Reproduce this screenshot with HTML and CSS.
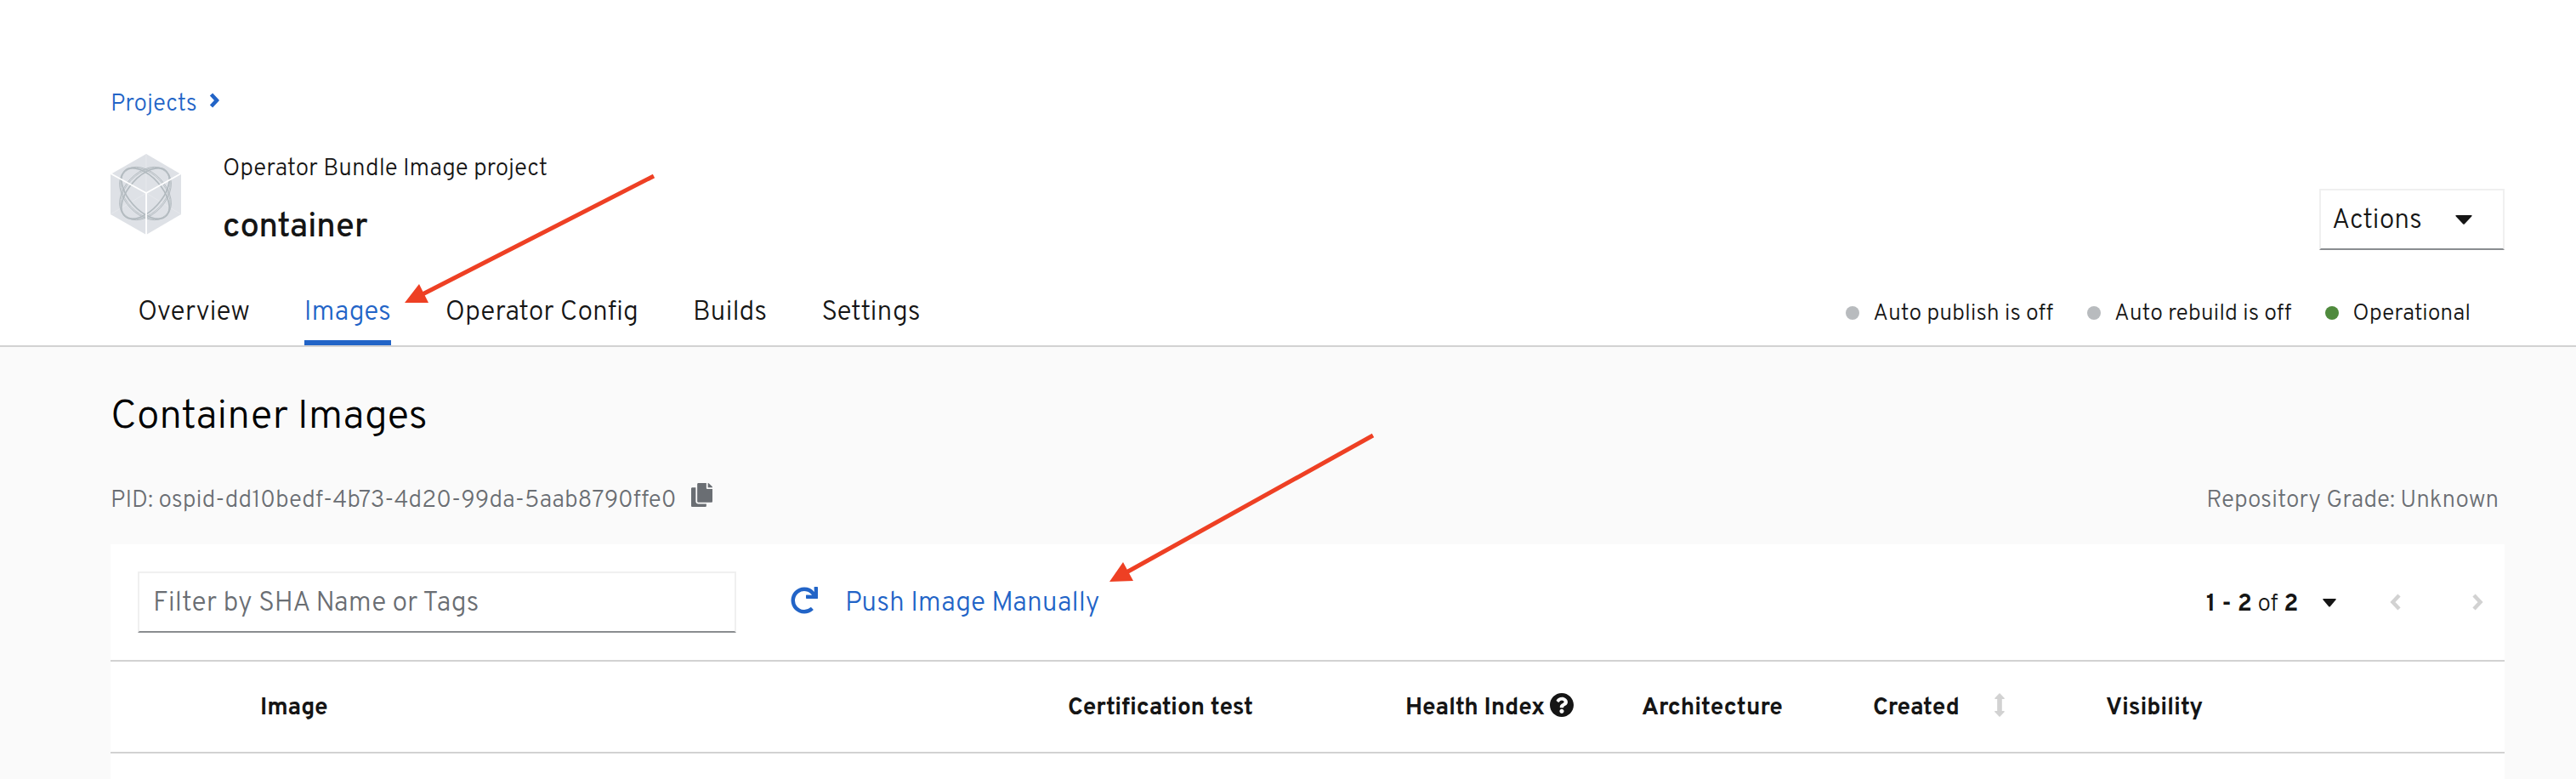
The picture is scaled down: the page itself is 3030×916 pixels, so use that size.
FILE: index.html
```
<!DOCTYPE html>
<html lang="en">
<head>
<meta charset="utf-8">
<title>Container Images</title>
<link rel="stylesheet" href="styles.css">
</head>
<body>
<header class="header">
  <nav class="crumbs"><a class="t crumb">Projects</a>
    <svg class="crumb-icon" viewBox="0 0 12 18"><path d="M2.500 2l6.500 7-6.500 7" fill="none" stroke="#2264c7" stroke-width="4.500"/></svg>
  </nav>
  <div class="project">
    <svg class="logo" viewBox="0 0 84 96">
      <path d="M42 0l41 24v47L42 95 0 71V24z" fill="#dee1e6"/>
      <path d="M42 1v45M42 46L0 71M42 46l41 25" stroke="#e6e8ec" stroke-width="1"/>
      <g fill="none" stroke="#b2babf">
        <g id="orbit"><ellipse cx="41" cy="46.500" rx="36" ry="24.500" transform="rotate(47 41 46.500)" stroke-width=".9"/><ellipse cx="41" cy="46.500" rx="35" ry="23" transform="rotate(47 41 46.500)" stroke-width=".8"/><ellipse cx="41" cy="46.500" rx="36" ry="19.500" transform="rotate(48 41 46.500)" stroke-width="1.600"/></g>
        <g transform="translate(82 0) scale(-1 1)"><use href="#orbit"/></g>
      </g>
      <path d="M0 23l42 23 41-23M42 46v49" fill="none" stroke="#fff" stroke-width="1.800"/>
    </svg>
    <div class="titles">
      <p class="t kind">Operator Bundle Image project</p>
      <h1 class="t name">container</h1>
    </div>
    <button class="actions"><span class="t actions-label">Actions</span>
      <svg class="actions-caret" viewBox="0 0 20 11"><path d="M1.500 0h17q2 0 .7 1.500L11 10.200q-1 1-2 0L.8 1.500Q-.5 0 1.500 0z" fill="#151515"/></svg>
    </button>
  </div>
  <div class="tabbar">
    <nav class="tabs">
      <a class="tab"><span class="t overview">Overview</span></a>
      <a class="tab active"><span class="t images">Images</span></a>
      <a class="tab"><span class="t config">Operator Config</span></a>
      <a class="tab"><span class="t builds">Builds</span></a>
      <a class="tab"><span class="t settings">Settings</span></a>
    </nav>
    <div class="statuses">
      <span class="status"><i class="dot"></i><span class="t publish">Auto publish is off</span></span>
      <span class="status"><i class="dot"></i><span class="t rebuild">Auto rebuild is off</span></span>
      <span class="status"><i class="dot green"></i><span class="t operational">Operational</span></span>
    </div>
  </div>
</header>
<main class="main">
  <h2 class="t heading">Container Images</h2>
  <div class="meta">
    <span class="t pid">PID: ospid-dd10bedf-4b73-4d20-99da-5aab8790ffe0</span>
    <svg class="copy" viewBox="0 0 448 512" preserveAspectRatio="none"><path fill="#6a6e73" d="M320 448v40c0 13.255-10.745 24-24 24H24c-13.255 0-24-10.745-24-24V120c0-13.255 10.745-24 24-24h72v296c0 30.879 25.121 56 56 56h168zm0-344V0H152c-13.255 0-24 10.745-24 24v368c0 13.255 10.745 24 24 24h272c13.255 0 24-10.745 24-24V128H344c-13.200 0-24-10.800-24-24zm120.971-31.029L375.029 7.029A24 24 0 0 0 358.059 0H352v96h96v-6.059a24 24 0 0 0-7.029-16.970z"/></svg>
    <span class="t grade">Repository Grade: Unknown</span>
  </div>
  <section class="card">
    <div class="toolbar">
      <div class="filter"><span class="t filter-label">Filter by SHA Name or Tags</span></div>
      <svg class="refresh" viewBox="0 0 512 512"><path fill="#2264c7" d="M500.330 0h-47.410a12 12 0 0 0-12 12.570l4 82.760A247.420 247.420 0 0 0 256 8C119.340 8 7.900 119.530 8 256.190 8.100 393.070 119.100 504 256 504a247.100 247.100 0 0 0 166.180-63.910 12 12 0 0 0 .48-17.430l-34-34a12 12 0 0 0-16.380-.55A176 176 0 1 1 402.100 157.800l-101.530-4.870a12 12 0 0 0-12.570 12v47.410a12 12 0 0 0 12 12h200.330a12 12 0 0 0 12-12V12a12 12 0 0 0-12-12z"/></svg>
      <a class="t push">Push Image Manually</a>
      <div class="pager">
        <span class="t range"><b>1 - 2</b> of <b>2</b></span>
        <svg class="range-caret" viewBox="0 0 16 10"><path d="M1 0h14q1.500 0 .5 1.300L9 9q-1 1-2 0L.5 1.300Q-.5 0 1 0z" fill="#151515"/></svg>
        <svg class="prev" viewBox="0 0 14 20"><path d="M11 2L3.500 10l7.500 8" fill="none" stroke="#d2d2d2" stroke-width="4.500"/></svg>
        <svg class="next" viewBox="0 0 14 20"><path d="M3 2l7.500 8L3 18" fill="none" stroke="#d2d2d2" stroke-width="4.500"/></svg>
      </div>
    </div>
    <div class="thead">
      <span><b class="t c-image">Image</b></span>
      <span><b class="t c-cert">Certification test</b></span>
      <span class="health"><b class="t c-health">Health Index</b>
        <svg class="help" viewBox="8 8 496 496"><path fill="#151515" d="M504 256c0 136.997-111.043 248-248 248S8 392.997 8 256C8 119.083 119.043 8 256 8s248 111.083 248 248zM262.655 90c-54.497 0-89.255 22.957-116.549 63.758-3.536 5.286-2.353 12.415 2.715 16.258l34.699 26.310c5.205 3.947 12.621 3.008 16.665-2.122 17.864-22.658 30.113-35.797 57.303-35.797 20.429 0 45.698 13.148 45.698 32.958 0 14.976-12.363 22.667-32.534 33.976C247.128 238.528 216 254.941 216 296v4c0 6.627 5.373 12 12 12h56c6.627 0 12-5.373 12-12v-1.333c0-28.462 83.186-29.647 83.186-106.667 0-58.002-60.165-102-116.531-102zM256 338c-25.365 0-46 20.635-46 46 0 25.364 20.635 46 46 46s46-20.636 46-46c0-25.365-20.635-46-46-46z"/></svg></span>
      <span><b class="t c-arch">Architecture</b></span>
      <span class="created"><b class="t c-created">Created</b>
        <svg class="sort" viewBox="0 0 12 28"><path d="M6 1l5 5.300H8v15.400h3L6 27l-5-5.300h3V6.300H1z" fill="#d2d2d2" stroke="#d2d2d2" stroke-width="1.600" stroke-linejoin="round"/></svg></span>
      <span><b class="t c-vis">Visibility</b></span>
    </div>
  </section>
</main>
<svg class="arrows" width="3030" height="916" viewBox="0 0 3030 916">
  <g fill="none" stroke="#ee4024" stroke-width="5"><path d="M769 207L495 347M1615 512L1325 673"/></g>
  <path fill="#ee4024" d="M476 356l17-22 11 22zM1305 684l16-23 12 22z"/>
</svg>
</body>
</html>
```
FILE: styles.css
```
* { box-sizing: border-box; }
body { margin: 0; width: 3030px; height: 916px; overflow: hidden; background: #fafafa; font-family: Overpass, Roboto, sans-serif; font-weight: 360; color: #151515; }
h1, h2, p { margin: 0; font-weight: inherit; }
svg { display: block; flex: none; }
.t { display: block; white-space: nowrap; flex: none; line-height: 40px; font-size: 28px; }
b { font-weight: 680; }
.header { height: 408px; background: #fff; border-bottom: 2px solid #d2d2d2; padding: 100px 84px 0 130px; display: flex; flex-direction: column; }
.crumbs { display: flex; height: 40px; }
.crumb { color: #2264c7; width: 102px; margin-top: 3px; }
.crumb-icon { width: 12px; height: 18px; margin: 9px 0 0 14px; }
.project { display: flex; margin-top: 36px; height: 164px; }
.logo { width: 84px; height: 96px; margin-top: 5px; }
.titles { margin-left: 48px; padding-top: 3px; }
.kind { letter-spacing: -.06px; }
.name { font-size: 40px; font-weight: 480; letter-spacing: -.35px; line-height: 56px; margin-top: 21px; }
.actions { margin: 46px 0 0 auto; width: 218px; height: 72px; border: 2px solid #f0f0f0; border-bottom-color: #8a8d90; background: #fff; padding: 0 36px 0 13px; display: flex; align-items: center; justify-content: space-between; font: inherit; color: inherit; }
.actions-label { font-size: 32px; padding-top: 3px; }
.actions-caret { width: 20px; height: 11px; }
.tabbar { display: flex; justify-content: space-between; height: 66px; padding: 0 40px 0 32px; }
.tabs { display: flex; gap: 64px; }
.tab { padding-top: 8px; height: 66px; border-bottom: 6px solid transparent; }
.tab .t { font-size: 32px; letter-spacing: -.08px; }
.active { color: #2264c7; border-color: #2264c7; }
.statuses { display: flex; gap: 40px; padding-top: 8px; }
.status { display: flex; align-items: center; height: 40px; gap: 16px; }
.status .t { font-size: 26.8px; letter-spacing: -.08px; padding-top: 2px; }
.dot { width: 16px; height: 16px; border-radius: 50%; background: #b8bbbe; }
.green { background: #4f8a3d; }
.main { padding: 55px 84px 0 130px; }
.heading { font-size: 48px; letter-spacing: -.15px; line-height: 56px; color: #000; }
.meta { display: flex; margin-top: 49px; height: 40px; color: #6a6e73; }
.meta .t { margin-top: 1px; }
.pid { letter-spacing: .03px; }
.copy { width: 25px; height: 28px; margin-left: 18px; }
.meta .grade { margin: 1px 7px 0 auto; letter-spacing: -.08px; }
.card { margin-top: 32px; height: 276px; background: #fff; }
.toolbar { height: 138px; border-bottom: 2px solid #d2d2d2; display: flex; align-items: center; padding: 0 25px 0 32px; }
.filter { width: 704px; height: 72px; border: 2px solid #f0f0f0; border-bottom-color: #8a8d90; padding: 16px; color: #6a6e73; }
.filter-label { font-size: 32px; letter-spacing: -.04px; }
.refresh { width: 32px; height: 32px; margin: 0 0 4px 64px; }
.push { font-size: 32px; letter-spacing: -.04px; color: #2264c7; margin-left: 32px; padding-top: 3px; }
.pager { margin-left: auto; display: flex; align-items: center; }
.range { width: 109px; padding-top: 5px; }
.range-caret { width: 16px; height: 10px; margin: 2px 0 0 28px; }
.prev, .next { width: 14px; height: 20px; }
.prev { margin-left: 63px; }
.next { margin-left: 82px; }
.thead { height: 108px; border-bottom: 2px solid #d2d2d2; display: grid; grid-template-columns: 950px 397px 278px 272px 274px 1fr; align-items: center; padding-left: 176px; }
.thead .t { padding-top: 3px; letter-spacing: -.12px; }
.health, .created { display: flex; align-items: center; }
.help { width: 28px; height: 28px; margin: 0 0 4px 6px; }
.sort { width: 12px; height: 28px; margin: 0 0 4px 41px; }
.arrows { position: absolute; left: 0; top: 0; pointer-events: none; }
```
